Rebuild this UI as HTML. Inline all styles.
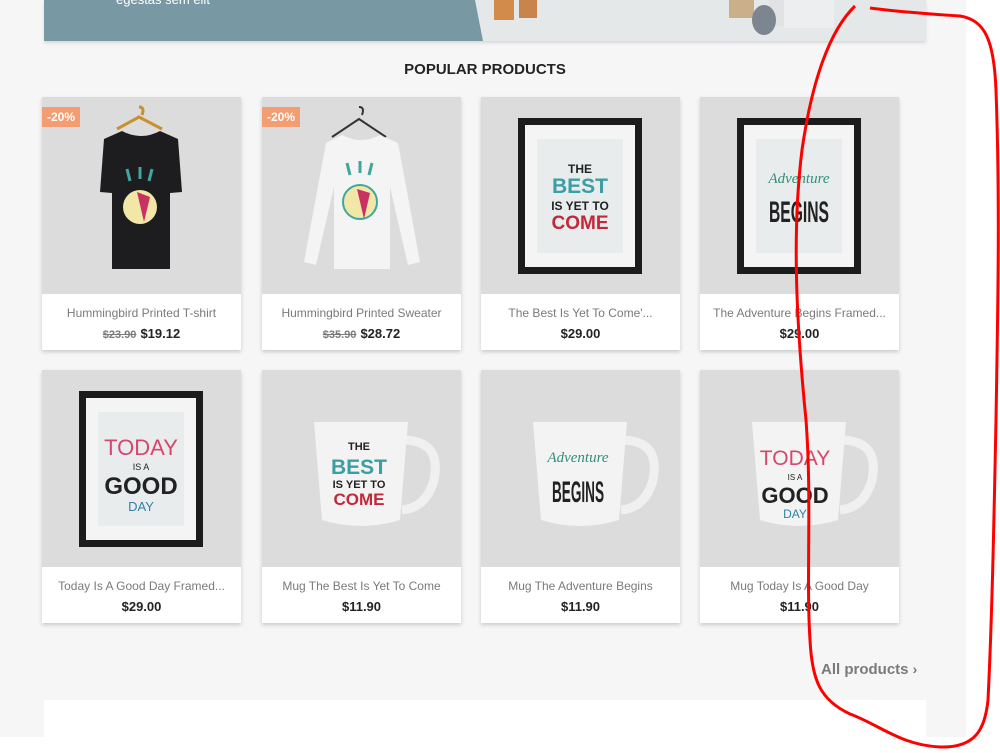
<!DOCTYPE html>
<html><head><meta charset="utf-8"><style>
*{margin:0;padding:0;box-sizing:border-box}
body{width:1000px;height:753px;background:#fff;position:relative;overflow:hidden;font-family:"Liberation Sans",sans-serif}
.bg{position:absolute;left:0;top:0;width:966px;height:737px;background:#f6f6f6}
.banner{position:absolute;left:44px;top:0;width:882px;height:41px;background:#e4e8e9;overflow:hidden;box-shadow:0 2px 3px rgba(0,0,0,.12)}
.card{position:absolute;width:199px;height:253px;background:#fff;box-shadow:0 2px 4px rgba(0,0,0,.18)}
.img{position:absolute;left:0;top:0;width:199px;height:197px;background:#dcdcdc;overflow:hidden}
.name{position:absolute;top:209px;left:0;width:199px;text-align:center;font-size:12px;color:#7a7a7a}
.price{position:absolute;top:229px;left:0;width:199px;text-align:center;font-size:13px;font-weight:bold;color:#232323}
.price s{color:#7a7a7a;font-weight:bold;font-size:11px;margin-right:4px}
.badge{position:absolute;left:0;top:10px;background:#f39d72;color:#fff;font-weight:bold;font-size:12px;padding:3px 5px}
h2{position:absolute;top:61px;left:0;width:970px;text-align:center;font-size:15px;font-weight:bold;color:#232323}
</style></head><body>
<div class="bg"></div>
<div class="banner">
<svg width="882" height="41" style="position:absolute;left:0;top:0"><polygon points="0,0 431,0 439,41 0,41" fill="#7899a4"/>
<rect x="685" y="0" width="25" height="18" fill="#c9b08a"/><rect x="725" y="0" width="30" height="26" fill="#e0e2e4"/><ellipse cx="720" cy="20" rx="12" ry="15" fill="#7d8590"/><rect x="740" y="0" width="50" height="28" fill="#eceeef"/>
<rect x="450" y="0" width="20" height="20" fill="#d28b4a"/><rect x="475" y="0" width="18" height="18" fill="#c8844a"/></svg>
<div style="position:absolute;left:72px;top:-8px;color:#fff;font-size:13px">egestas sem elit</div>
</div>
<h2>POPULAR PRODUCTS</h2>

<!-- row 1 -->
<div class="card" style="left:42px;top:97px"><div class="img"><svg width="199" height="197">
<path d="M97 10 q6 0 3 8 M75 32 L97 20 L120 32" stroke="#c9902f" stroke-width="3" fill="none"/>
<path d="M80 34 L62 42 L58 95 L70 96 L70 172 L128 172 L128 96 L140 95 L136 42 L118 34 Q99 44 80 34Z" fill="#1d1d1f"/>
<circle cx="98" cy="110" r="17" fill="#f2e7a6"/><path d="M95 95 L102 125 L108 100Z" fill="#c83262"/>
<path d="M85 72 l3 12 M98 70 v12 M110 72 l-3 12" stroke="#3fa7a0" stroke-width="3"/></svg></div>
<div class="badge">-20%</div><div class="name">Hummingbird Printed T-shirt</div><div class="price"><s>$23.90</s>$19.12</div></div>

<div class="card" style="left:262px;top:97px"><div class="img"><svg width="199" height="197">
<path d="M97 10 q6 0 3 8 M70 40 L97 22 L124 40" stroke="#333" stroke-width="2" fill="none"/>
<path d="M80 38 L64 46 L42 165 L54 168 L72 90 L72 172 L128 172 L128 90 L146 168 L158 165 L136 46 L118 38 Q99 48 80 38Z" fill="#f4f4f4"/>
<circle cx="98" cy="105" r="17" fill="#f2e7a6" stroke="#3fa7a0" stroke-width="2"/><path d="M95 92 L102 122 L108 96Z" fill="#c83262"/>
<path d="M85 66 l3 12 M98 64 v12 M110 66 l-3 12" stroke="#3fa7a0" stroke-width="3"/></svg></div>
<div class="badge">-20%</div><div class="name">Hummingbird Printed Sweater</div><div class="price"><s>$35.90</s>$28.72</div></div>

<div class="card" style="left:481px;top:97px"><div class="img"><svg width="199" height="197">
<rect x="37" y="21" width="124" height="156" fill="#1c1c1c"/><rect x="44" y="28" width="110" height="142" fill="#f4f4f4"/><rect x="56" y="42" width="86" height="114" fill="#e9ecec"/>
<text x="99" y="76" text-anchor="middle" font-size="12" font-weight="bold" fill="#222">THE</text>
<text x="99" y="96" text-anchor="middle" font-size="21" font-weight="bold" fill="#3a9fa5">BEST</text>
<text x="99" y="113" text-anchor="middle" font-size="12" font-weight="bold" fill="#222">IS YET TO</text>
<text x="99" y="132" text-anchor="middle" font-size="19" font-weight="bold" fill="#c3283a">COME</text></svg></div>
<div class="name">The Best Is Yet To Come'...</div><div class="price">$29.00</div></div>

<div class="card" style="left:700px;top:97px"><div class="img"><svg width="199" height="197">
<rect x="37" y="21" width="124" height="156" fill="#1c1c1c"/><rect x="44" y="28" width="110" height="142" fill="#f4f4f4"/><rect x="56" y="42" width="86" height="114" fill="#e9ecec"/>
<text x="99" y="86" text-anchor="middle" font-size="15" font-style="italic" font-family="Liberation Serif" fill="#2f8f7e">Adventure</text>
<text x="99" y="125" text-anchor="middle" font-size="30" font-weight="bold" fill="#222" textLength="60" lengthAdjust="spacingAndGlyphs">BEGINS</text></svg></div>
<div class="name">The Adventure Begins Framed...</div><div class="price">$29.00</div></div>

<!-- row 2 -->
<div class="card" style="left:42px;top:370px"><div class="img"><svg width="199" height="197">
<rect x="37" y="21" width="124" height="156" fill="#1c1c1c"/><rect x="44" y="28" width="110" height="142" fill="#f4f4f4"/><rect x="56" y="42" width="86" height="114" fill="#e9ecec"/>
<text x="99" y="85" text-anchor="middle" font-size="22" fill="#d6466e">TODAY</text>
<text x="99" y="100" text-anchor="middle" font-size="9" fill="#222">IS A</text>
<text x="99" y="124" text-anchor="middle" font-size="24" font-weight="bold" fill="#222">GOOD</text>
<text x="99" y="141" text-anchor="middle" font-size="13" fill="#2f82a8">DAY</text></svg></div>
<div class="name">Today Is A Good Day Framed...</div><div class="price">$29.00</div></div>

<div class="card" style="left:262px;top:370px"><div class="img"><svg width="199" height="197">
<path d="M140 70 q40 0 32 40 q-8 28 -32 30" stroke="#f0f0f0" stroke-width="9" fill="none"/>
<path d="M52 52 L146 52 L138 150 Q99 162 60 150Z" fill="#f3f3f3"/>
<text x="97" y="80" text-anchor="middle" font-size="11" font-weight="bold" fill="#222">THE</text>
<text x="97" y="104" text-anchor="middle" font-size="21" font-weight="bold" fill="#3a9fa5">BEST</text>
<text x="97" y="118" text-anchor="middle" font-size="11" font-weight="bold" fill="#222">IS YET TO</text>
<text x="97" y="135" text-anchor="middle" font-size="17" font-weight="bold" fill="#c3283a">COME</text></svg></div>
<div class="name">Mug The Best Is Yet To Come</div><div class="price">$11.90</div></div>

<div class="card" style="left:481px;top:370px"><div class="img"><svg width="199" height="197">
<path d="M140 70 q40 0 32 40 q-8 28 -32 30" stroke="#f0f0f0" stroke-width="9" fill="none"/>
<path d="M52 52 L146 52 L138 150 Q99 162 60 150Z" fill="#f3f3f3"/>
<text x="97" y="92" text-anchor="middle" font-size="15" font-style="italic" font-family="Liberation Serif" fill="#2f8f7e">Adventure</text>
<text x="97" y="132" text-anchor="middle" font-size="30" font-weight="bold" fill="#222" textLength="52" lengthAdjust="spacingAndGlyphs">BEGINS</text></svg></div>
<div class="name">Mug The Adventure Begins</div><div class="price">$11.90</div></div>

<div class="card" style="left:700px;top:370px"><div class="img"><svg width="199" height="197">
<path d="M140 70 q40 0 32 40 q-8 28 -32 30" stroke="#f0f0f0" stroke-width="9" fill="none"/>
<path d="M52 52 L146 52 L138 150 Q99 162 60 150Z" fill="#f3f3f3"/>
<text x="95" y="95" text-anchor="middle" font-size="21" fill="#d6466e">TODAY</text>
<text x="95" y="110" text-anchor="middle" font-size="8" fill="#222">IS A</text>
<text x="95" y="133" text-anchor="middle" font-size="22" font-weight="bold" fill="#222">GOOD</text>
<text x="95" y="148" text-anchor="middle" font-size="12" fill="#2f82a8">DAY</text></svg></div>
<div class="name">Mug Today Is A Good Day</div><div class="price">$11.90</div></div>

<div style="position:absolute;left:821px;top:661px;font-size:15px;font-weight:bold;color:#7a7a7a">All products <span style="font-size:14px">›</span></div>
<div style="position:absolute;left:44px;top:700px;width:882px;height:53px;background:#fff"></div>

<svg width="1000" height="753" style="position:absolute;left:0;top:0">
<path d="M855 6 C830 30 812 80 802 150 C792 230 796 320 806 420 C812 500 806 580 810 640 C812 680 820 700 850 714 C880 725 900 745 940 747 C975 748 985 730 988 700 C992 620 994 520 996 420 C998 300 1000 200 996 90 C994 40 985 20 960 16 C930 14 900 12 870 8" stroke="#f00" stroke-width="3" fill="none"/>
</svg>
</body></html>
